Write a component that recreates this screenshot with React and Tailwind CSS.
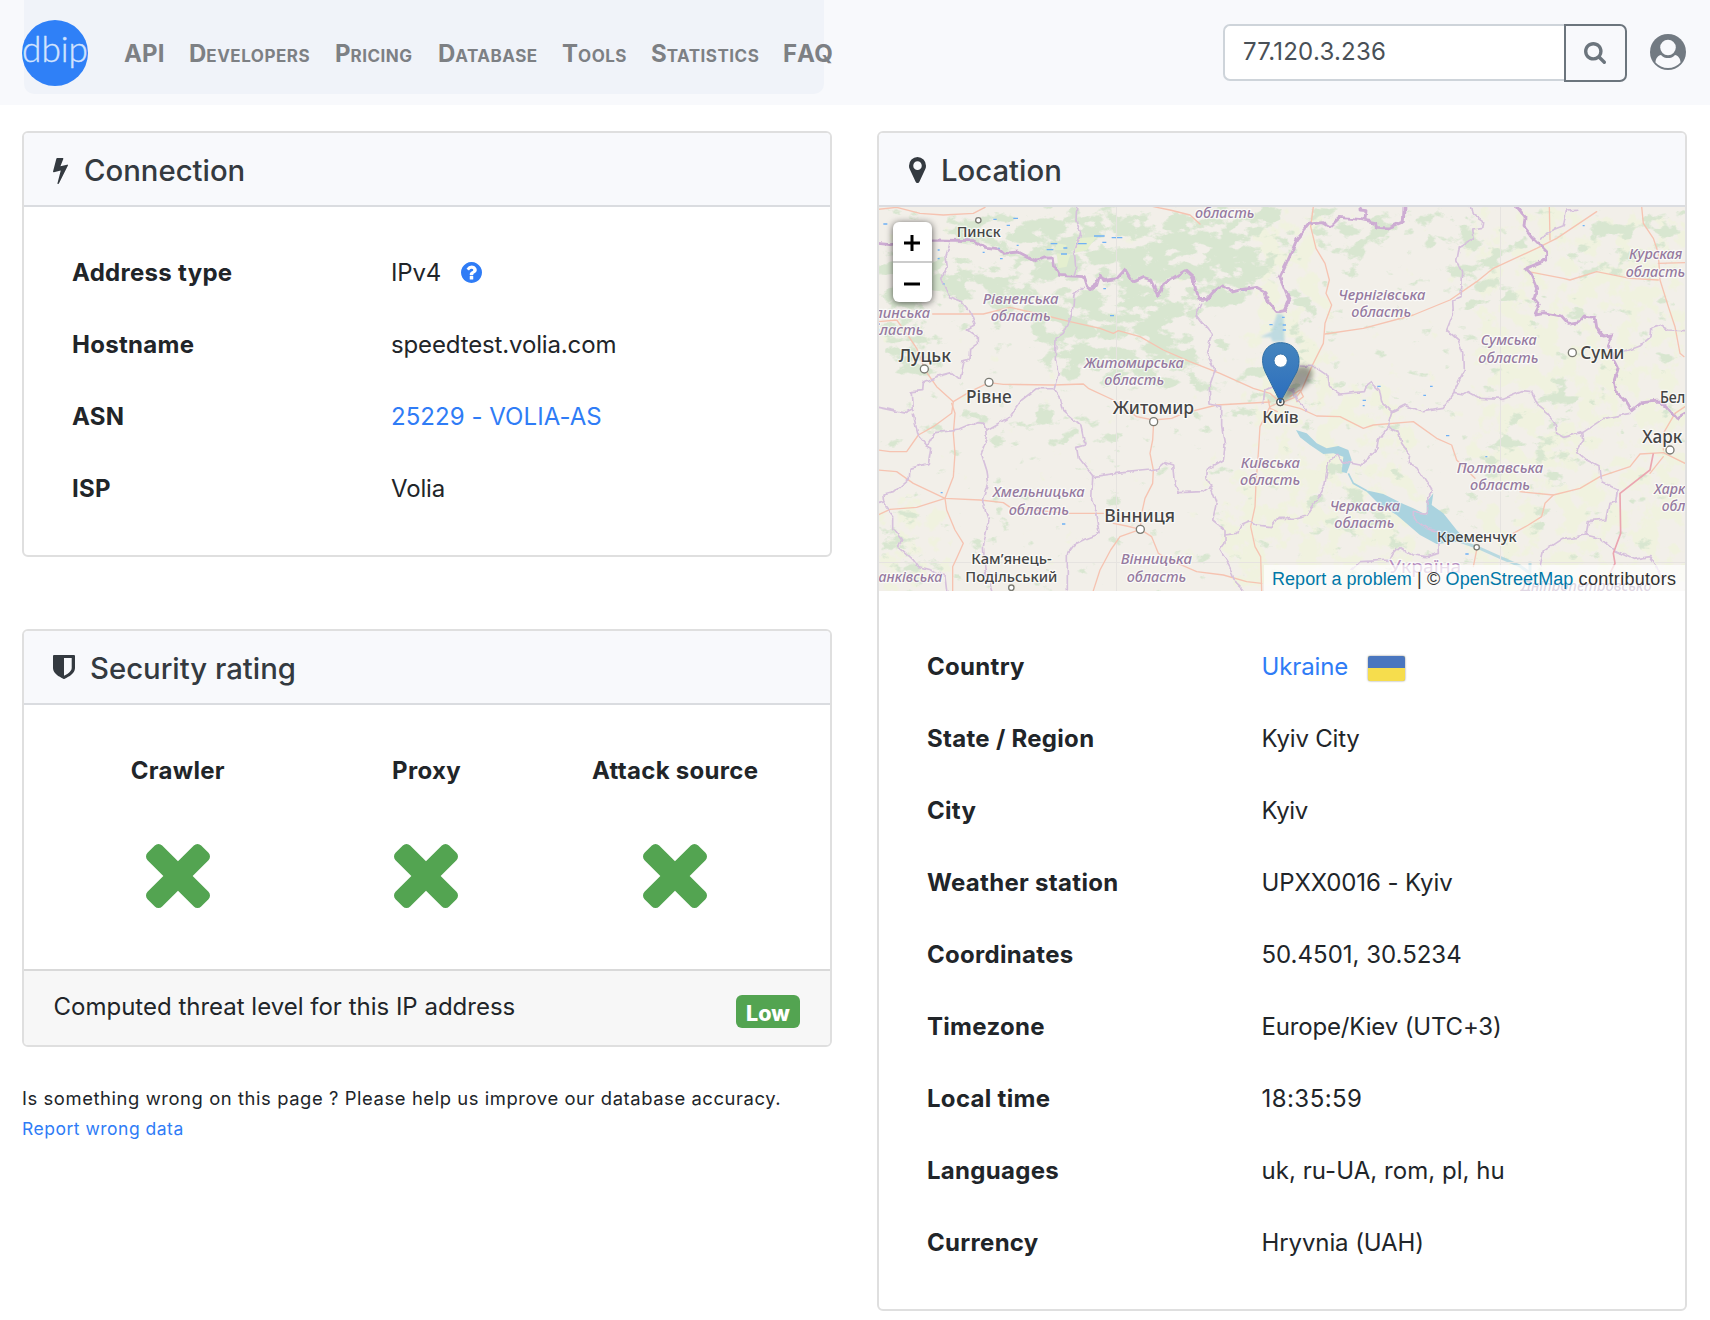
const ICONS = {
  bolt: ["447 0 897 1792", "M1333 566q18 20 7 44l-540 1157q-13 25-42 25-4 0-14-2-17-5-25.5-19t-4.5-30l197-808-406 101q-4 1-12 1-18 0-31-11-18-15-13-39l201-825q4-14 16-23t28-9h328q19 0 32 12.5t13 29.5q0 8-5 18l-171 463 396-98q8-2 12-2 19 0 34 15z"],
  times: ["302 366 1188 1188", "M1490 1322q0 40-28 68l-136 136q-28 28-68 28t-68-28l-294-294-294 294q-28 28-68 28t-68-28l-136-136q-28-28-28-68t28-68l294-294-294-294q-28-28-28-68t28-68l136-136q28-28 68-28t68 28l294 294 294-294q28-28 68-28t68 28l136 136q28 28 28 68t-28 68l-294 294 294 294q28 28 28 68z"],
  search: ["64 128 1664 1664", "M1216 832q0-185-131.5-316.5t-316.5-131.5-316.5 131.5-131.5 316.5 131.5 316.5 316.5 131.5 316.5-131.5 131.5-316.5zm512 832q0 52-38 90t-90 38q-54 0-90-38l-343-342q-179 124-399 124-143 0-273.5-55.5t-225-150-150-225-55.5-273.5 55.5-273.5 150-225 225-150 273.5-55.5 273.5 55.5 225 150 150 225 55.5 273.5q0 220-124 399l343 343q37 37 37 90z"],
  marker: ["384 128 1024 1536", "M1152 640q0-106-75-181t-181-75-181 75-75 181 75 181 181 75 181-75 75-181zm256 0q0 109-33 179l-364 774q-16 33-47.5 52t-67.5 19-67.5-19-46.5-52l-365-774q-33-70-33-179 0-212 150-362t362-150 362 150 150 362z"],
  shield: ["256 128 1280 1664", "M1344 1024v-640h-448v1137q119-63 213-137 235-184 235-360zm192-768v768q0 86-33.5 170.5t-83 150-118 127.5-126.5 103-121 77.5-89.5 49.5-42.5 20q-12 6-26 6t-26-6q-16-7-42.5-20t-89.5-49.5-121-77.5-126.5-103-118-127.5-83-150-33.5-170.5v-768q0-26 19-45t45-19h1152q26 0 45 19t19 45z"],
  question: ["128 128 1536 1536", "M1024 1376v-192q0-14-9-23t-23-9h-192q-14 0-23 9t-9 23v192q0 14 9 23t23 9h192q14 0 23-9t9-23zm256-672q0-88-55.5-163t-138.5-116-170-41q-243 0-371 213-15 24 8 42l132 100q7 6 19 6 16 0 25-12 53-68 86-92 34-24 86-24 48 0 85.5 26t37.5 59q0 38-20 61t-68 45q-63 28-115.5 86.5t-52.5 125.5v36q0 14 9 23t23 9h192q14 0 23-9t9-23q0-19 21.5-49.5t54.5-49.5q32-18 49-28.5t46-35 44.5-48 28-60.5 12.5-81zm384 192q0 209-103 385.5t-279.5 279.5-385.5 103-385.5-103-279.5-279.5-103-385.5 103-385.5 279.5-279.5 385.5-103 385.5 103 279.5 279.5 103 385.5z"],
};

function Icon({ name, className }) {
  const [box, d] = ICONS[name];
  return (
    <svg viewBox={box} preserveAspectRatio="none" fill="currentColor" className={className}>
      <path d={d} />
    </svg>
  );
}

/* Map line work. Each half of the map has its own drawing space at 3 units per pixel. */
const WEST = {
  border: [
    "M24,130 L60,134 190,120 310,122 345,142 385,146 400,160 445,156 500,184 522,174 550,174 555,208 565,226 640,230 648,255 662,268 680,256 690,222 702,242 740,236 767,206 790,245 820,232 845,240 866,286 878,256 905,236 925,224 945,212 968,232 986,298 1010,298 1030,276 1060,254 1085,276 1120,268 1160,262 1185,275 1195,305 1220,335 1245,335 1258,300",
  ],
  region: [
    "M620,20 L618,60 632,100 615,150 620,200 612,226",
    "M240,130 L228,170 232,200 215,235 238,290 275,305 300,335 316,378 295,390 322,410 322,430 302,445 300,480 282,485 270,538 245,518 200,530 160,545 158,572 127,575 130,630 110,640 24,622",
    "M640,262 L612,285 605,350 580,400 558,415 556,480 565,520 552,566 500,565 455,600 420,650 350,690 345,670 320,668 270,690 195,698 172,738 145,705 130,645",
    "M172,738 L185,745 178,790 120,805 118,835 70,878 42,885 45,920 68,950 68,985 95,1020 85,1040 130,1080 145,1100 185,1110 200,1120 225,1130 230,1172",
    "M350,690 L352,715 334,760 350,810 356,850 338,905 356,960 340,1040 345,1110 365,1172",
    "M552,566 L570,590 580,630 632,675 645,735 620,742 625,775 668,830 665,900 680,940 690,1000 650,1015 610,1035 592,1060 592,1172",
    "M668,830 L740,820 840,810 865,805 885,788 908,795 912,840 925,878 1000,875 1022,858 1010,830 1012,808 1060,780 1065,740 1055,680 1055,620 1020,612 1018,560 1035,510 1010,460 1025,405 978,345 995,310",
    "M1022,858 L1040,905 1028,960 1065,990 1065,1030 1050,1050 1080,1100 1095,1150 1118,1172",
    "M1065,1005 L1100,1000 1110,975 1140,962 1160,975 1205,980 1225,955 1260,955",
    "M24,910 L45,905",
    "M1180,606 L1185,570 1210,560 1230,550",
  ],
  road: [
    "M24,28 L80,22 150,40 220,45 310,40 345,22",
    "M188,342 L340,342 420,322 520,345 600,365 690,385 730,400 745,392 810,410 880,450 960,485 1050,520 1150,565 1200,580 1230,606",
    "M24,365 L80,360 110,400 140,445 165,510 200,560 250,605",
    "M250,605 L300,575 357,548 400,553 550,555 640,552 655,565 730,600 800,650 850,660 905,655 940,640 1040,615 1200,606",
    "M250,605 L245,640 190,680 145,705 110,755 60,755 24,750",
    "M245,610 L255,640 250,700 255,760 250,830 225,895 230,930 255,990 280,1030 262,1070 248,1100 248,1172",
    "M24,810 L80,815 130,850 225,895 330,900 400,908 425,925 600,940 700,940",
    "M225,895 L140,922 60,928 24,945",
    "M851,665 L848,720 840,760 850,810 848,850 825,895 815,940 811,985",
    "M811,988 L750,1010 722,1050 690,1110 670,1172",
    "M811,988 L845,1010 865,1060 900,1080 980,1115 1060,1125 1130,1145 1175,1150",
    "M811,988 L770,978 730,970",
    "M1230,606 L1200,620 1170,680 1165,760 1158,850 1155,920 1142,980 1155,1040 1172,1070 1175,1172",
    "M1195,600 L1200,625 1222,635",
    "M850,20 L900,30 960,45 990,72",
  ],
};

const EAST = {
  border: [
    "M0,335 L15,332 28,300 0,232 20,190 50,120 90,72 130,68 150,80 180,52 240,58 290,68 292,82 325,84 370,65 372,20",
    "M255,60 L258,32 240,30 240,20",
    "M710,20 L735,50 732,80 760,115 800,155 800,182 735,208 755,230 770,265 762,295 778,315 765,342 790,338 845,348 865,370 895,365 910,348 945,352 950,385 970,408 998,405 985,435 1000,470 1015,500 1003,540 1010,580 1040,605 1055,632 1085,608 1140,603 1160,620 1190,655 1215,640",
  ],
  region: [
    "M575,20 L580,45 608,65 605,85 575,90 580,115 538,140 530,185 545,215 540,290 518,300 520,340 500,390 535,420 548,460 550,510 525,560 522,580 490,625 430,635 375,615 335,635 305,605 298,570 275,548 255,562 250,575 180,582 145,560 140,520 110,500 60,498",
    "M522,580 L550,585 565,575 600,595 670,598 725,575 755,578 775,620 800,640 825,670 830,700 850,712 905,698 970,655 1050,640",
    "M905,698 L908,720 890,755 920,780 960,800 965,845 1015,870 1010,905 990,910 980,960 925,965 918,1005 850,1015 790,1055 780,1095",
    "M918,1005 L960,1015 1000,1050 1060,1078 1110,1070 1130,1100 1145,1140",
    "M335,635 L322,680 295,715 290,750 255,780 240,795 190,785 175,760 145,790 135,850 110,900 80,945 40,955 0,955",
    "M322,680 L360,700 365,730 390,765 385,790 410,800 455,870 440,905 445,940 400,935 400,955 440,985 475,995 478,1060 440,1070 400,1065 360,1040 340,1060 330,1080 240,1085 215,1110",
    "M785,120 L800,100 850,80 860,30 890,28",
    "M1015,460 L1080,435 1110,410 1112,385 1140,376 1165,390 1215,392",
    "M0,560 L40,570 50,600 80,630",
  ],
  road: [
    "M100,20 L92,80 108,145 135,190 148,240 138,280 155,315 135,370 130,430 95,500 65,570 50,590 0,610",
    "M135,402 L250,385 400,345 510,300 590,245 640,205 770,145 830,115 950,35",
    "M808,20 L810,120",
    "M1085,20 L1090,70 1120,115 1135,160 1140,240 1165,320 1185,380 1200,460 1212,470",
    "M745,215 L850,235 870,240 950,215 1050,235 1135,240",
    "M1135,190 L1215,188",
    "M0,610 L60,625 110,648 180,650 250,685 280,675 400,665 470,715 515,735 530,780 585,835",
    "M720,875 L820,885 900,865 960,830 1050,800 1080,762 1150,758 1215,790",
    "M820,885 L795,910 785,950 745,975 700,1000",
    "M590,1050 L580,1100",
    "M30,590 L60,570 70,590 50,605",
    "M1150,750 L1150,700 1185,640 1215,620",
    "M1150,770 L1110,820",
  ],
};

/* [text, left, right, baseline, size, kind] */
const WEST_LABELS = [
  ["Пинск", 260, 392, 110, 44, "town"],
  ["область", 975, 1153, 54, 43, "region"],
  ["Рівненська", 338, 566, 311, 43, "region"],
  ["область", 362, 542, 364, 43, "region"],
  ["Волинська", -38, 180, 354, 43, "region"],
  ["область", -20, 160, 406, 43, "region"],
  ["Луцьк", 86, 243, 486, 52, "town"],
  ["Рівне", 288, 425, 608, 52, "town"],
  ["Житомирська", 642, 942, 503, 43, "region"],
  ["область", 703, 882, 556, 43, "region"],
  ["Житомир", 728, 972, 642, 52, "town"],
  ["Хмельницька", 368, 644, 892, 43, "region"],
  ["область", 416, 597, 945, 43, "region"],
  ["Вінниця", 703, 915, 967, 52, "town"],
  ["Кам’янець-", 304, 545, 1093, 44, "town"],
  ["Подільський", 286, 562, 1146, 44, "town"],
  ["Вінницька", 752, 966, 1093, 43, "region"],
  ["область", 770, 948, 1146, 43, "region"],
  ["Франківська", -34, 217, 1146, 43, "region"],
];

const EAST_LABELS = [
  ["Київська", -118, 60, 803, 43, "region"],
  ["область", -120, 60, 855, 43, "region"],
  ["Київ", -53, 56, 669, 50, "town"],
  ["Чернігівська", 175, 436, 299, 43, "region"],
  ["область", 214, 393, 352, 43, "region"],
  ["Сумська", 602, 770, 436, 43, "region"],
  ["область", 595, 775, 489, 43, "region"],
  ["Суми", 901, 1033, 477, 52, "town"],
  ["Курская", 1047, 1207, 178, 43, "region"],
  ["область", 1037, 1215, 231, 43, "region"],
  ["Бел", 1140, 1216, 610, 46, "town"],
  ["Харк", 1087, 1207, 728, 52, "town"],
  ["Харк", 1122, 1216, 881, 43, "region"],
  ["обл", 1145, 1216, 934, 43, "region"],
  ["Полтавська", 530, 790, 819, 43, "region"],
  ["область", 570, 750, 871, 43, "region"],
  ["Черкаська", 149, 360, 932, 43, "region"],
  ["область", 163, 343, 985, 43, "region"],
  ["Кременчук", 471, 710, 1026, 44, "town"],
  ["Україна", 328, 544, 1118, 52, "country"],
  ["Дніпропетровсько", 722, 1115, 1172, 43, "region"],
];

function Labels({ items }) {
  return items.map(([text, x0, x1, y, size, kind], i) => (
    <text
      key={i}
      x={x0}
      y={y}
      fontSize={size}
      textLength={x1 - x0}
      lengthAdjust="spacingAndGlyphs"
      fontStyle={kind === "region" ? "italic" : "normal"}
      fontWeight={kind === "country" ? 400 : 500}
      fill={kind === "town" ? "#454545" : kind === "region" ? "#967aa0" : "#b78fc0"}
      stroke="#ffffff"
      strokeOpacity="0.7"
      strokeWidth="7"
      strokeLinejoin="round"
      paintOrder="stroke"
    >
      {text}
    </text>
  ));
}

function Lines({ set }) {
  return (
    <g fill="none" strokeLinejoin="round" strokeLinecap="round">
      {set.road.map((d, i) => <path key={"a" + i} d={d} stroke="#f6c3b1" strokeWidth="4" />)}
      {set.region.map((d, i) => <path key={"b" + i} d={d} stroke="#d6c0dc" strokeWidth="5" filter="url(#rough)" />)}
      {set.border.map((d, i) => <path key={"c" + i} d={d} stroke="#cdacd3" strokeWidth="8.5" filter="url(#rough)" />)}
    </g>
  );
}

function Dots({ points }) {
  return points.map(([x, y, r], i) => (
    <circle key={i} cx={x} cy={y} r={r} fill="#fff" stroke="#7a7a72" strokeWidth="4" />
  ));
}

function MapDrawing() {
  return (
    <svg viewBox="0 0 806 384" className="block h-full w-full" style={{ fontFamily: '"Noto Sans", sans-serif' }}>
      <defs>
        <filter id="forest" x="0" y="0" width="806" height="384" filterUnits="userSpaceOnUse">
          <feGaussianBlur in="SourceAlpha" stdDeviation="7" result="area" />
          <feTurbulence type="fractalNoise" baseFrequency="0.045 0.07" numOctaves="5" seed="8" result="noise" />
          <feColorMatrix in="noise" type="matrix" values="0 0 0 0 0  0 0 0 0 0  0 0 0 0 0  1 0 0 0 0" result="n" />
          <feComposite in="area" in2="n" operator="arithmetic" k1="0" k2="6" k3="10" k4="-7.8" result="mix" />
          <feFlood floodColor="#d8e6d0" result="c" />
          <feComposite in="c" in2="mix" operator="in" />
        </filter>
        <filter id="farm" x="0" y="0" width="806" height="384" filterUnits="userSpaceOnUse">
          <feGaussianBlur in="SourceAlpha" stdDeviation="9" result="area" />
          <feTurbulence type="fractalNoise" baseFrequency="0.05" numOctaves="4" seed="3" result="noise" />
          <feColorMatrix in="noise" type="matrix" values="0 0 0 0 0  0 0 0 0 0  0 0 0 0 0  1 0 0 0 0" result="n" />
          <feComposite in="area" in2="n" operator="arithmetic" k1="0" k2="4" k3="9" k4="-6.8" result="mix" />
          <feFlood floodColor="#f0f2df" result="c" />
          <feComposite in="c" in2="mix" operator="in" />
        </filter>
        <filter id="rough" x="-200" y="-50" width="1700" height="1300" filterUnits="userSpaceOnUse">
          <feTurbulence type="fractalNoise" baseFrequency="0.03" numOctaves="3" seed="5" />
          <feDisplacementMap in="SourceGraphic" scale="16" xChannelSelector="R" yChannelSelector="G" />
        </filter>
        <filter id="soft" x="-50%" y="-50%" width="200%" height="200%">
          <feGaussianBlur stdDeviation="8" />
        </filter>
        <filter id="haze" x="-50%" y="-50%" width="200%" height="200%">
          <feGaussianBlur stdDeviation="3" />
        </filter>
        <linearGradient id="pin" x1="0" y1="0" x2="0" y2="1">
          <stop offset="0" stopColor="#4585be" />
          <stop offset="1" stopColor="#2b6dbd" />
        </linearGradient>
      </defs>

      <rect width="806" height="384" fill="#f2efe9" />
      <g filter="url(#farm)" fillOpacity="0.66">
        <rect x="370" y="0" width="80" height="384" />
        <rect x="590" y="0" width="220" height="384" />
        <rect x="340" y="260" width="60" height="130" />
        <rect x="0" y="290" width="70" height="100" />
        <rect x="440" y="170" width="100" height="220" />
      </g>
      <g filter="url(#forest)">
        <g fillOpacity="0.58">
          <path d="M60,8 L180,0 320,0 405,0 395,70 330,110 210,80 120,40 70,30Z" />
          <path d="M55,50 L160,60 210,90 300,95 325,140 320,175 230,180 190,140 160,150 140,110 60,90Z" />
          <path d="M190,100 L215,90 210,170 180,180Z" />
          <path d="M430,10 L475,30 470,60 440,45Z" />
        </g>
        <g fillOpacity="0.46">
          <path d="M70,205 L150,208 220,210 270,225 265,240 150,225 80,215Z" />
          <path d="M0,40 L60,60 60,160 20,170 0,150Z" />
          <path d="M405,60 L430,80 430,160 410,160Z" />
        </g>
        <g fillOpacity="0.34">
          <path d="M430,0 L560,0 640,40 600,60 520,40 480,50Z" />
          <path d="M560,70 L650,20 660,50 600,110 580,100Z" />
          <path d="M330,180 L400,150 425,190 350,215Z" />
          <path d="M665,180 L700,150 705,240 680,260 670,330 655,320Z" />
          <path d="M610,200 L640,200 630,260 605,290Z" />
          <path d="M20,300 L60,360 60,384 0,384 0,330Z" />
          <path d="M450,250 L530,330 520,350 430,310Z" />
          <path d="M700,20 L806,0 806,50 700,70Z" />
        </g>
        <rect width="806" height="384" fillOpacity="0.14" />
      </g>

      <g transform="translate(401 -7) scale(0.33333)" fill="#aad3df">
        <path d="M48,690 L80,700 110,730 140,745 175,738 205,750 215,780 200,820 185,815 190,770 160,760 130,762 90,735 60,712Z" />
        <path d="M205,820 L220,850 260,872" fill="none" stroke="#aad3df" strokeWidth="5" />
        <path d="M255,870 L310,882 370,912 400,925 440,945 440,905 460,880 455,915 490,940 530,990 560,1022 470,1032 420,1005 350,945 300,915Z" />
        <path d="M530,1020 L600,1045 660,1072 720,1098 750,1120 750,1085" fill="none" stroke="#aad3df" strokeWidth="9" opacity="0.8" />
        <path d="M-8,340 L10,345 14,425 -22,425 -28,412 -60,412 -25,395 -18,370Z" opacity="0.7" filter="url(#haze)" />
      </g>
      <g transform="translate(-9 -7) scale(0.33333)" stroke="#6fb1f5" strokeWidth="4" fill="none">
        <path fill="#e4efcf" stroke="none" d="M560,160 L600,165 590,200 565,205Z M620,115 L680,110 650,150 610,160Z M560,130 L590,135 580,150 555,150Z" />
        <path d="M672,108h32M725,113h32M542,131h20M618,131h32M530,149h20M573,162h18M580,144h12M697,127h12M370,58h10M430,55h14M410,76h10M40,72h12M203,150h6M203,176h6M338,157h6M383,145h6M390,176h8M440,136h6M218,252h6M700,266h8M720,347h12M1115,270h8M212,878h6M576,972h10M1236,352h8M1198,374h10M1238,375h10M1238,390h10" />
      </g>
      <g transform="translate(401 -7) scale(0.33333)" stroke="#6fb1f5" strokeWidth="4" fill="none">
        <path d="M292,559h10M248,601h10M248,617h6M430,586h8M450,559h8M498,707h10M616,770h6M908,77h6M556,1062h10" />
      </g>

      <path d="M237.500,0V384M621.500,0V384M0,355.500H806" stroke="#e6e3e0" strokeWidth="1" />

      <g transform="translate(-9 -7) scale(0.33333)">
        <Lines set={WEST} />
      </g>
      <g transform="translate(401 -7) scale(0.33333)">
        <Lines set={EAST} />
        <path d="M1120,760 L1110,810 1020,880 1022,1000 1000,1060 1005,1090 990,1120" fill="none" stroke="#eba5b0" strokeWidth="5" />
        <Dots points={[[877, 458, 12], [1170, 750, 12], [590, 1042, 8], [1, 606, 11]]} />
        <circle cx="1" cy="606" r="4" fill="#444" />
        <Labels items={EAST_LABELS} />
      </g>
      <g transform="translate(-9 -7) scale(0.33333)">
        <Dots points={[[163, 507, 12], [357, 547, 12], [851, 665, 12], [811, 988, 12], [325, 61, 8], [424, 1163, 8]]} />
        <Labels items={WEST_LABELS} />
        <path d="M1232,608 L1270,510 Q1300,485 1325,508 Q1335,530 1310,556Z" fill="#000" opacity="0.36" filter="url(#soft)" />
        <path d="M1231,606 L1186,516 C1164,468 1188,428 1232,428 C1276,428 1300,468 1280,516Z" fill="url(#pin)" stroke="#2e6da4" strokeWidth="3" />
        <circle cx="1232" cy="482" r="20" fill="#fff" stroke="#3874ab" strokeWidth="3" />
        <circle cx="1231" cy="606" r="11" fill="none" stroke="#55585a" strokeWidth="3" />
      </g>
    </svg>
  );
}

function CardTitle({ icon, iconClass, children }) {
  return (
    <div className="flex h-[74px] items-center border-b-2 border-[#dadce0] bg-[#f8f9fc] pl-[29px] text-[#343a40]">
      <Icon name={icon} className={iconClass} />
      <h2 className="mt-1 text-[29.300px] leading-9 font-medium">{children}</h2>
    </div>
  );
}

function Row({ label, labelClass, children, tracking = "tracking-[-0.14px]" }) {
  return (
    <div className="flex h-[72px] items-center pt-0.5 leading-9">
      <div className={labelClass + " shrink-0 font-bold tracking-[0.3px]"}>{label}</div>
      <div className={"flex items-center " + tracking}>{children}</div>
    </div>
  );
}

const NAV = [
  ["A", "PI", "w-[65px]"],
  ["D", "evelopers", "w-[146px]"],
  ["P", "ricing", "w-[103px]"],
  ["D", "atabase", "w-[124px]"],
  ["T", "ools", "w-[89px]"],
  ["S", "tatistics", "w-[132px]"],
  ["F", "AQ", "w-[48px]"],
];

const LOCATION = [
  ["State / Region", "Kyiv City", "tracking-[-0.2px]"],
  ["City", "Kyiv", "tracking-[-0.4px]"],
  ["Weather station", "UPXX0016 - Kyiv", "tracking-[-0.1px]"],
  ["Coordinates", "50.4501, 30.5234", "tracking-normal"],
  ["Timezone", "Europe/Kiev (UTC+3)", "tracking-[-0.16px]"],
  ["Local time", "18:35:59", "tracking-[0.45px]"],
  ["Languages", "uk, ru-UA, rom, pl, hu", "tracking-[0.05px]"],
  ["Currency", "Hryvnia (UAH)", "tracking-[-0.1px]"],
];

export default function App() {
  return (
    <div className="min-h-[1320px] bg-white font-['Inter',sans-serif] text-2xl text-[#212529]">
      <header className="flex h-[105px] bg-[#f8f9fc]">
        <div className="ml-6 flex h-[93.500px] w-[800px] shrink-0 items-center rounded-b-[10px] bg-[#f0f3f9]">
          <svg viewBox="0 0 66 66" className="mt-[12px] -ml-0.5 h-[66px] w-[66px] shrink-0">
            <circle cx="33" cy="33" r="33" fill="#2f80f7" />
            <text x="0" y="41.500" textLength="66" lengthAdjust="spacingAndGlyphs" fontSize="35" fill="#d3e4fe" stroke="#d3e4fe" strokeWidth="0.4" style={{ fontFamily: "Lato, sans-serif", fontWeight: 300 }}>dbip</text>
          </svg>
          <nav className="mt-[14px] ml-9 flex font-bold text-[#7d8084]">
            {NAV.map(([first, rest, w]) => (
              <a key={first + rest} className={w + " shrink-0 whitespace-nowrap"}>
                {first}<span className={rest === rest.toUpperCase() ? "tracking-[0.2px]" : "text-[17px] tracking-[0.5px] uppercase"}>{rest}</span>
              </a>
            ))}
          </nav>
        </div>
        <div className="mt-6 mr-6 ml-auto flex h-[58px] items-center">
          <div className="-mt-px flex h-[57px] w-[341px] items-center rounded-l-[7px] border-2 border-r-0 border-[#ced4da] bg-white pl-[18px] text-[#495057]">
            <span className="-mt-0.5 tracking-[0.25px]">77.120.3.236</span>
          </div>
          <button className="flex h-[58px] w-[63px] items-center justify-center rounded-r-[7px] border-2 border-[#6c757d] text-[#6c757d]">
            <Icon name="search" className="mr-0.5 h-[22px] w-[22px]" />
          </button>
          <svg viewBox="0 0 36 36" className="-mt-0.5 ml-[23px] h-9 w-9">
            <circle cx="18" cy="18" r="18" fill="#727a82" />
            <path d="M5.500 28.500C5.500 24.500 8 21.500 11 21C13 23.500 15.500 24 18 24C20.500 24 23 23.500 25 21C28 21.500 30.500 24.500 30.500 28.500C27.500 32 23 34 18 34C13 34 8.500 32 5.500 28.500Z" fill="#f8f9fc" />
            <circle cx="18" cy="13.500" r="9" fill="#727a82" />
            <circle cx="18" cy="13.500" r="7.800" fill="#f8f9fc" />
          </svg>
        </div>
      </header>

      <main className="flex items-start gap-[45px] pt-[26px] pl-[22px]">
        <div className="w-[810px]">
          <section className="h-[426px] overflow-hidden rounded-md border-2 border-[#dfdfdf] bg-white">
            <CardTitle icon="bolt" iconClass="mt-0.5 mr-4 h-7 w-[15px]">Connection</CardTitle>
            <div className="pt-[29px] pl-12">
              <Row label="Address type" labelClass="w-[319px]">
                IPv4 <Icon name="question" className="-mt-0.5 ml-[20px] h-[21px] w-[21px] text-[#2f7cf6]" />
              </Row>
              <Row label="Hostname" labelClass="w-[319px]">speedtest.volia.com</Row>
              <Row label="ASN" labelClass="w-[319px]" tracking="tracking-[0.05px]"><a className="text-[#2f7cf6]">25229 - VOLIA-AS</a></Row>
              <Row label="ISP" labelClass="w-[319px]">Volia</Row>
            </div>
          </section>

          <section className="mt-[72px] overflow-hidden rounded-md border-2 border-[#dfdfdf] bg-white">
            <CardTitle icon="shield" iconClass="mr-[15px] h-[26px] w-[22px]">Security rating</CardTitle>
            <div className="grid h-[264px] grid-cols-3 pt-12 pr-[30.500px] pl-[29.500px] text-center leading-9 font-bold tracking-[0.3px]">
              {["Crawler", "Proxy", "Attack source"].map((name) => (
                <div key={name} className="flex flex-col items-center">
                  <span>{name}</span>
                  <Icon name="times" className="mt-[55px] h-16 w-16 text-[#53a451]" />
                </div>
              ))}
            </div>
            <div className="flex h-[76px] items-start justify-between border-t-2 border-[#d9d9d9] bg-[#f7f7f7] pr-[30px] pl-[29.500px]">
              <span className="mt-[18px] leading-9">Computed threat level for this IP address</span>
              <span className="mt-6 flex h-[33px] w-16 items-center justify-center rounded-md bg-[#53a451] text-[21.500px] font-extrabold text-white"><span className="mt-[3px]">Low</span></span>
            </div>
          </section>

          <p className="mt-9">
            <span className="block text-[18.400px] leading-[30px] tracking-[0.585px]">Is something wrong on this page ? Please help us improve our database accuracy.</span>
            <a className="block text-[17.500px] leading-[32px] tracking-[0.5px] text-[#2f7cf6]">Report wrong data</a>
          </p>
        </div>

        <section className="h-[1180px] w-[810px] overflow-hidden rounded-md border-2 border-[#dfdfdf] bg-white">
          <CardTitle icon="marker" iconClass="mt-0.5 ml-px mr-[15px] h-[26px] w-[17px]">Location</CardTitle>
          <div className="relative h-[384px] w-[806px] overflow-hidden font-['Liberation_Sans',sans-serif]">
            <MapDrawing />
            <div className="absolute top-[15px] left-[14px] h-20 w-[39px] rounded-md bg-white text-black shadow-[0_1px_7px_rgba(0,0,0,0.65)]">
              <div className="flex h-[41px] items-center justify-center border-b-2 border-[#ccc] pr-px">
                <svg viewBox="0 0 16 16" className="mt-0.5 h-4 w-4"><path d="M8 0V16M0 8H16" stroke="#000" strokeWidth="3" /></svg>
              </div>
              <div className="flex h-[39px] items-center justify-center pr-px">
                <svg viewBox="0 0 16 16" className="mt-0.5 h-4 w-4"><path d="M0 8H16" stroke="#000" strokeWidth="3" /></svg>
              </div>
            </div>
            <div className="absolute right-0 bottom-0 flex h-[26px] w-[421px] items-center bg-white/70 pt-0.5 pl-[8px] text-[18px] whitespace-pre text-[#333]">
              <a className="tracking-[0.05px] text-[#0078a8]">Report a problem</a><span className="tracking-[0.15px]"> | © </span><a className="tracking-[0.05px] text-[#0078a8]">OpenStreetMap</a><span className="tracking-[0.3px]"> contributors</span>
            </div>
          </div>
          <div className="pt-[39px] pl-12">
            <Row label="Country" labelClass="w-[334.500px]">
              <a className="text-[#2f7cf6]">Ukraine</a>
              <span className="mt-[3px] ml-5 flex h-[25px] w-[37px] flex-col overflow-hidden rounded-[2px] bg-[#f6dd4d] shadow-[0_0_2px_rgba(0,0,0,0.5)]">
                <span className="h-3 bg-[#4a76bf]" />
              </span>
            </Row>
            {LOCATION.map(([label, value, tracking]) => (
              <Row key={label} label={label} labelClass="w-[334.500px]" tracking={tracking}>{value}</Row>
            ))}
          </div>
        </section>
      </main>
    </div>
  );
}
